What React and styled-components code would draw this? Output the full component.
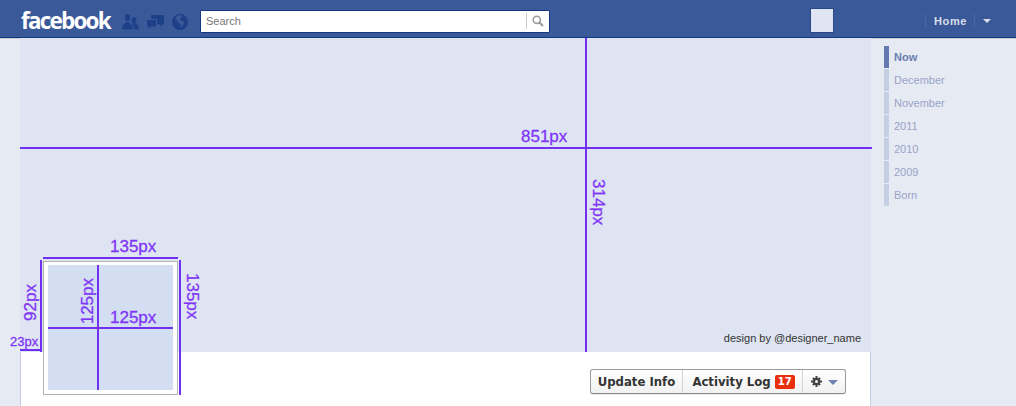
import React from 'react'
import styled, { createGlobalStyle } from 'styled-components'

const GlobalStyle = createGlobalStyle`
  html, body {
    margin: 0;
    height: 100%;
    overflow: hidden;
    background: #e6eaf2;
    font-family: "Liberation Sans", Arial, sans-serif;
  }
`

const LINE_COLOR = '#7030f0'
const LABEL_COLOR = '#8035f8'

const Page = styled.div`
  width: 1016px;
  height: 406px;
  overflow: hidden;
  display: flex;
  flex-direction: column;
`

const TopBar = styled.header`
  height: 37px;
  flex: none;
  display: flex;
  align-items: center;
  background: #3a5999;
  border-bottom: 1px solid #133783;
  padding: 0 25px 0 21px;
`

const Logo = styled.div`
  width: 90px;
  margin-top: 3px;
  color: #fff;
  font-family: "Open Sans", sans-serif;
  font-size: 22.5px;
  font-weight: 700;
  letter-spacing: -1.8px;
  line-height: 33px;
  white-space: nowrap;
`

const Jewels = styled.div`
  display: flex;
  align-items: center;
  gap: 8px;
  margin: 7px 0 0 11px;
  width: 78px;
  color: #1d4088;
`

const SearchBox = styled.div`
  width: 348px;
  height: 21px;
  margin-top: 5px;
  display: flex;
  align-items: center;
  background: #fff;
  border: 1px solid #133783;
  border-radius: 1px;
`

const SearchText = styled.span`
  flex: 1;
  padding-left: 5px;
  color: #777;
  font-size: 11px;
`

const SearchButton = styled.div`
  width: 22px;
  height: 16px;
  display: flex;
  align-items: center;
  justify-content: center;
  border-left: 1px solid #ccc;
  color: #9a9a9a;
`

const Avatar = styled.div`
  width: 22px;
  height: 23px;
  margin: 4px 0 0 260px;
  background: #dfe5f2;
  border: 1px solid #2a4887;
`

const HomeNav = styled.nav`
  display: flex;
  align-items: center;
  height: 14px;
  margin: 5px 0 0 auto;
`

const HomeLink = styled.span`
  height: 14px;
  padding: 0 7px 0 8px;
  border-left: 1px solid #4b67a1;
  border-right: 1px solid #4b67a1;
  color: #d8dfea;
  font-size: 11px;
  font-weight: 700;
  line-height: 14px;
  letter-spacing: 0.6px;
`

const Caret = styled.span`
  width: 0;
  height: 0;
  margin-left: 8px;
  border-left: 4px solid transparent;
  border-right: 4px solid transparent;
  border-top: 4px solid #d8dfea;
`

const Body = styled.main`
  flex: 1;
  display: flex;
  border-top: 1px solid #c9c9c9;
`

const Timeline = styled.section`
  width: 851px;
  margin-left: 20px;
  margin-top: -1px;
  display: flex;
  flex-direction: column;
  position: relative;
`

const Cover = styled.div`
  height: 314px;
  flex: none;
  position: relative;
  background: #dee4f1;
`

const Credit = styled.span`
  position: absolute;
  right: 10px;
  bottom: 8px;
  color: #333;
  font-size: 11px;
`

const ActionBar = styled.div`
  flex: 1;
  display: flex;
  justify-content: flex-end;
  align-items: flex-start;
  padding: 17px 24px 0 0;
  box-sizing: border-box;
  background: #fff;
  border-left: 1px solid #c5cde5;
  border-right: 1px solid #c5cde5;
`

const ButtonGroup = styled.div`
  display: flex;
  height: 23px;
  border: 1px solid #999;
  border-bottom-color: #888;
  border-radius: 3px;
  background: linear-gradient(#fff, #f1f1f1);
  box-shadow: 0 1px 0 rgba(0, 0, 0, 0.08);
`

const ActionButton = styled.div`
  width: ${p => p.$width}px;
  display: flex;
  align-items: center;
  justify-content: center;
  gap: ${p => (p.$last ? 6 : 5)}px;
  box-sizing: border-box;
  border-right: ${p => (p.$last ? 'none' : '1px solid #d4d4d4')};
  color: #333;
  font-family: "DejaVu Sans", sans-serif;
  font-size: 11.7px;
  font-weight: 700;
`

const Badge = styled.span`
  margin: 0 -2px 0 -1px;
  padding: 1px 3px;
  border-radius: 2px;
  background: #e8300f;
  color: #fff;
  font-size: 10px;
  line-height: 12px;
`

const BlueCaret = styled.span`
  width: 0;
  height: 0;
  margin-top: 1px;
  border-left: 5px solid transparent;
  border-right: 5px solid transparent;
  border-top: 5px solid #6d84b4;
`

const ProfileFrame = styled.div`
  position: absolute;
  left: 23px;
  top: 223px;
  width: 125px;
  height: 125px;
  padding: 3px 4px 4px;
  background: #fff;
  border: 1px solid #b3b3b3;
`

const ProfileFill = styled.div`
  width: 125px;
  height: 125px;
  background: #d3def2;
`

const Line = styled.div`
  position: absolute;
  left: ${p => p.$x}px;
  top: ${p => p.$y}px;
  width: ${p => p.$w}px;
  height: ${p => p.$h}px;
  background: ${LINE_COLOR};
`

const Label = styled.span`
  position: absolute;
  left: ${p => p.$x}px;
  top: ${p => p.$y}px;
  color: ${LABEL_COLOR};
  font-size: ${p => p.$size || 17}px;
  line-height: 1;
  -webkit-text-stroke: 0.3px ${LABEL_COLOR};
  white-space: nowrap;
  writing-mode: ${p => (p.$dir ? 'vertical-rl' : 'horizontal-tb')};
  transform: ${p => (p.$dir === 'up' ? 'rotate(180deg)' : 'none')};
`

const Scrubber = styled.aside`
  margin: 7px 0 0 13px;
  display: flex;
  flex-direction: column;
  gap: 1px;
`

const ScrubItem = styled.div`
  height: 22px;
  display: flex;
  align-items: center;
  padding-left: 5px;
  border-left: 5px solid ${p => (p.$active ? '#6279b1' : '#c5cfe4')};
  color: ${p => (p.$active ? '#6a7db3' : '#99a3ca')};
  font-size: 11px;
  font-weight: ${p => (p.$active ? 700 : 400)};
`

const FriendsIcon = () => (
  <svg width="17" height="16" viewBox="0 0 17 16" fill="currentColor">
    <ellipse cx="5.500" cy="3.500" rx="2.700" ry="3.500" />
    <path d="M0 15.500c0-3.500 1-5 3.500-6.500l.5-1h3l.5 1c2.500 1.500 3.500 3 3.500 6.500z" />
    <ellipse cx="12" cy="6" rx="2.400" ry="3" />
    <path d="M12 15.500c0-2.500-.7-4.200-2-5.500l1-1.500h2l.5 1c2.200 1 3.500 2.500 3.500 6z" />
  </svg>
)

const MessagesIcon = () => (
  <svg width="17" height="16" viewBox="0 0 17 16" fill="currentColor">
    <path d="M4 1h13v9.500h-2V13l-2.500-2.500H10V5H4z" />
    <path d="M0 6h9v6.500H4L1.500 15v-2.500H0z" />
  </svg>
)

const GlobeIcon = () => (
  <svg width="16" height="16" viewBox="0 0 16 16">
    <circle cx="8" cy="8" r="8" fill="currentColor" />
    <path d="M5 1.500 8.500 1 10 2.500 8 4.500l1 2.500 3 .5-.5 3-2.500 3-.5-3.500L6 8.500 5.500 6.500 3 5z" fill="#3a5999" />
  </svg>
)

const SearchIcon = () => (
  <svg width="12" height="12" viewBox="0 0 12 12" fill="none" stroke="currentColor">
    <circle cx="4.800" cy="4.800" r="3.600" strokeWidth="1.600" />
    <path d="M7.500 7.500 11 11" strokeWidth="2.200" />
  </svg>
)

const GearIcon = () => (
  <svg width="11" height="11" viewBox="0 0 11 11" fill="#444">
    <circle cx="5.500" cy="5.500" r="3.800" />
    <path d="M4.500 0h2v11h-2zM0 4.500h11v2H0z" />
    <path d="M1.200 2.600 2.600 1.200l7.200 7.200-1.400 1.400zM8.400 1.200l1.400 1.400-7.200 7.200-1.400-1.400z" />
    <circle cx="5.500" cy="5.500" r="1.500" fill="#f4f4f4" />
  </svg>
)

const months = ['December', 'November', '2011', '2010', '2009', 'Born']

const App = () => (
  <Page>
    <GlobalStyle />
    <TopBar>
      <Logo>facebook</Logo>
      <Jewels>
        <FriendsIcon />
        <MessagesIcon />
        <GlobeIcon />
      </Jewels>
      <SearchBox>
        <SearchText>Search</SearchText>
        <SearchButton>
          <SearchIcon />
        </SearchButton>
      </SearchBox>
      <Avatar />
      <HomeNav>
        <HomeLink>Home</HomeLink>
        <Caret />
      </HomeNav>
    </TopBar>
    <Body>
      <Timeline>
        <Cover>
          <Credit>design by @designer_name</Credit>
        </Cover>
        <ActionBar>
          <ButtonGroup>
            <ActionButton $width={92}>Update Info</ActionButton>
            <ActionButton $width={120}>
              Activity Log <Badge>17</Badge>
            </ActionButton>
            <ActionButton $width={42} $last>
              <GearIcon />
              <BlueCaret />
            </ActionButton>
          </ButtonGroup>
        </ActionBar>

        <ProfileFrame>
          <ProfileFill />
        </ProfileFrame>

        {/* size annotations drawn on top of the template */}
        <Line $x={0} $y={109} $w={852} $h={2} />
        <Line $x={565} $y={0} $w={2} $h={314} />
        <Label $x={501} $y={90}>851px</Label>
        <Label $x={570} $y={141} $dir="down">314px</Label>

        <Line $x={23} $y={219} $w={135} $h={2} />
        <Label $x={90} $y={200}>135px</Label>
        <Line $x={159} $y={222} $w={2} $h={135} />
        <Label $x={164} $y={235} $dir="down">135px</Label>
        <Line $x={20} $y={222} $w={2} $h={92} />
        <Label $x={2} $y={246} $dir="up">92px</Label>
        <Line $x={0} $y={311} $w={22} $h={2} />
        <Label $x={-10} $y={297} $size={13}>23px</Label>

        <Line $x={77} $y={227} $w={2} $h={125} />
        <Line $x={28} $y={289} $w={125} $h={2} />
        <Label $x={59} $y={240} $dir="up">125px</Label>
        <Label $x={90} $y={271}>125px</Label>
      </Timeline>
      <Scrubber>
        <ScrubItem $active>Now</ScrubItem>
        {months.map(m => (
          <ScrubItem key={m}>{m}</ScrubItem>
        ))}
      </Scrubber>
    </Body>
  </Page>
)

export default App
